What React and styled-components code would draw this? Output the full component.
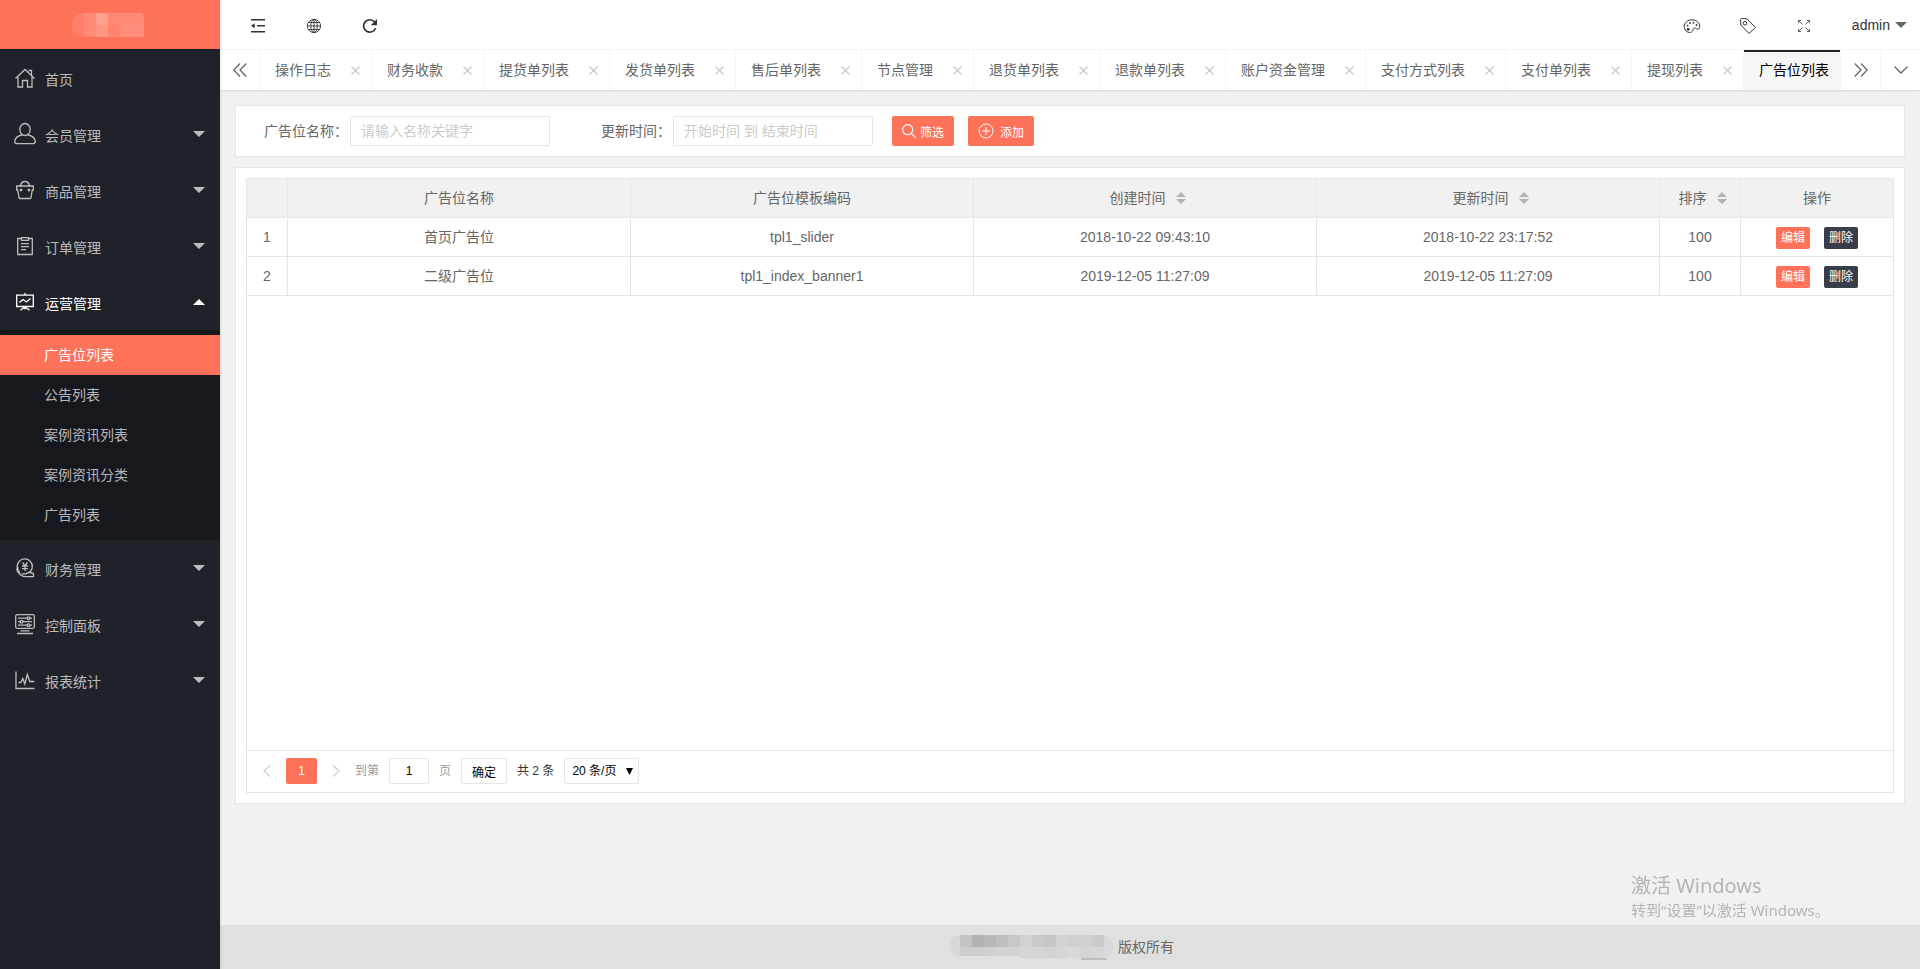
import React from 'react';
import styled, { createGlobalStyle, css } from 'styled-components';

const accent = '#ff725a';
const dark = '#20222a';
const line = '#e6e6e6';

const GlobalStyle = createGlobalStyle`
  *, *::before, *::after { box-sizing: border-box; }
  body {
    margin: 0;
    background: #f1f1f1;
    color: #666;
    font: 14px/24px "Liberation Sans", "Noto Sans CJK SC", sans-serif;
  }
  button, input, select { font-family: inherit; margin: 0; }
  button { cursor: pointer; padding: 0; border: 0; background: none; color: inherit; }
  a { color: inherit; text-decoration: none; }
  ul { list-style: none; margin: 0; padding: 0; }
`;

const Shell = styled.div`
  display: grid;
  grid-template-columns: 220px minmax(0, 1fr);
  min-height: 100vh;
`;

/* Side bar */
const Sidebar = styled.aside`
  background: ${dark};
  color: rgba(255, 255, 255, 0.7);
  box-shadow: 1px 0 2px rgba(0, 0, 0, 0.1);
  z-index: 2;
`;
const Logo = styled.a`
  display: flex;
  align-items: center;
  justify-content: center;
  height: 50px;
  background: ${accent};
  border-bottom: 1px solid #1a1b21;
  padding-right: 4px;
`;
const NavLink = styled.a`
  display: flex;
  align-items: center;
  height: 56px;
  padding: 0 15px 0 13px;
  color: ${(p) => (p.$open ? '#fff' : 'inherit')};
`;
const NavIcon = styled.svg`
  width: 24px;
  height: 24px;
  fill: none;
  stroke: currentColor;
  stroke-width: 1.3;
`;
const NavText = styled.span`
  flex: 1;
  padding: 4px 0 0 8px;
`;
const Caret = styled.svg`
  width: 12px;
  height: 6px;
  fill: currentColor;
`;
const SubMenu = styled.ul`
  && { padding: 5px 0; }
  background: #17181d;
  border-radius: 2px;
`;
const SubLink = styled.a`
  display: block;
  height: 40px;
  line-height: 40px;
  padding-left: 44px;
  ${(p) => p.$active && css`
    background: ${accent};
    color: #fff;
  `}
`;

/* Header and tabs */
const Main = styled.div`
  display: flex;
  flex-direction: column;
  min-width: 0;
`;
const Header = styled.header`
  display: flex;
  justify-content: space-between;
  height: 50px;
  padding-left: 10px;
  background: #fff;
  border-bottom: 1px solid #f6f6f6;
  color: #333;
`;
const Tools = styled.div`
  display: flex;
`;
const ToolButton = styled.button`
  display: flex;
  align-items: center;
  justify-content: center;
  width: 56px;
  height: 100%;
  padding-top: 2px;
`;
const ToolIcon = styled.svg`
  width: 16px;
  height: 16px;
  fill: none;
  stroke: currentColor;
  overflow: visible;
`;
const UserButton = styled.button`
  display: flex;
  align-items: center;
  gap: 5px;
  padding: 0 13px 0 20px;
  font-size: 14px;
  ${Caret} { color: #666; }
`;
const TabBar = styled.nav`
  display: flex;
  height: 40px;
  background: #fff;
  box-shadow: 0 1px 2px rgba(0, 0, 0, 0.1);
  z-index: 1;
`;
const TabControl = styled.button`
  display: flex;
  align-items: center;
  justify-content: center;
  flex: 0 0 40px;
  height: 40px;
  border: 0 solid #f6f6f6;
  border-width: ${(p) => (p.$side === 'left' ? '0 1px 0 0' : '0 0 0 1px')};
`;
const TabList = styled.ul`
  display: flex;
  flex: 1;
  min-width: 0;
  overflow: hidden;
`;
const Tab = styled.li`
  display: flex;
  align-items: center;
  flex: none;
  gap: 17px;
  padding: 0 8px 0 15px;
  border-right: 1px solid #f6f6f6;
  white-space: nowrap;
  ${(p) => p.$active && css`
    background: #f6f6f6;
    color: #000;
    box-shadow: inset 0 2px 0 ${dark};
  `}
`;
const TabClose = styled.button`
  display: flex;
  align-items: center;
  justify-content: center;
  width: 15px;
  height: 16px;
  color: #c8c8c8;
`;
const Stroke = styled.svg`
  fill: none;
  stroke: currentColor;
  flex: none;
`;

/* Content */
const Content = styled.main`
  flex: 1;
  display: flex;
  flex-direction: column;
  gap: 10px;
  padding: 15px;
`;
const Card = styled.section`
  padding: 10px;
  background: #fff;
  border: 1px solid ${line};
`;
const Filters = styled.form`
  display: flex;
  align-items: center;
  gap: 19px;
`;
const Field = styled.div`
  display: flex;
  align-items: center;
`;
const FieldLabel = styled.label`
  width: 104px;
  padding-right: 2px;
  text-align: right;
  white-space: nowrap;
`;
const TextInput = styled.input`
  width: 200px;
  height: 30px;
  padding: 0 10px;
  border: 1px solid ${line};
  border-radius: 2px;
  font-size: 14px;
  &::placeholder { color: #ccc; }
`;
const Buttons = styled.div`
  display: flex;
  gap: 14px;
`;
const ActionButton = styled.button`
  display: flex;
  align-items: center;
  gap: ${(p) => p.$gap};
  height: 30px;
  padding: 0 10px;
  border-radius: 2px;
  background: ${accent};
  color: #fff;
  font-size: 12px;
`;
const TableBox = styled.div`
  border: 1px solid ${line};
`;
const TableBody = styled.div`
  min-height: 571px;
`;
const Table = styled.table`
  width: 100%;
  table-layout: fixed;
  border-collapse: separate;
  border-spacing: 0;
  text-align: center;
  th, td {
    height: 39px;
    padding: 0;
    border: 0 solid ${line};
    border-width: 0 1px 1px 0;
    font-weight: 400;
  }
  th { background: #f1f1f1; }
  th:last-child, td:last-child { border-right: 0; }
`;
const Col = styled.col`
  width: ${(p) => p.$w};
`;
const SortHead = styled.span`
  display: inline-flex;
  align-items: center;
  gap: 10px;
  padding-left: 5px;
`;
const SortButton = styled.button`
  display: flex;
`;
const RowActions = styled.div`
  display: flex;
  justify-content: center;
  gap: 14px;
  padding-top: 1px;
`;
const MiniButton = styled.button`
  height: 22px;
  padding: 0 5px;
  border-radius: 2px;
  background: ${(p) => (p.$dark ? '#393d49' : accent)};
  color: #fff;
  font-size: 12px;
  line-height: 22px;
`;
const Pager = styled.div`
  display: flex;
  align-items: center;
  height: 42px;
  padding: 0 0 1px 7px;
  border-top: 1px solid ${line};
  color: #999;
  font-size: 12px;
  gap: 10px;
`;
const PageStep = styled.button`
  display: flex;
  align-items: center;
  justify-content: center;
  width: 26px;
  height: 26px;
  color: #d2d2d2;
`;
const PageNumber = styled.button`
  width: 31px;
  height: 26px;
  margin: 0 -4px;
  border-radius: 2px;
  background: ${accent};
  color: #fff;
  font-size: 12px;
`;
const PageJump = styled.label`
  display: flex;
  align-items: center;
  gap: 10px;
  margin-left: -4px;
`;
const PageInput = styled.input`
  width: 40px;
  height: 26px;
  border: 1px solid ${line};
  border-radius: 2px;
  text-align: center;
  font-size: 12px;
  color: #000;
`;
const PageConfirm = styled.button`
  width: 46px;
  height: 26px;
  border: 1px solid ${line};
  border-radius: 2px;
  color: #000;
  font-size: 12px;
`;
const PageTotal = styled.span`
  color: #333;
`;
const SelectBox = styled.div`
  display: grid;
  align-items: center;
  > * { grid-area: 1 / 1; }
  > svg { justify-self: end; margin-right: 6px; pointer-events: none; }
`;
const PageSelect = styled.select`
  appearance: none;
  width: 75px;
  height: 26px;
  padding: 0 0 0 7px;
  border: 1px solid ${line};
  border-radius: 2px;
  background: #fff;
  color: #000;
  font-size: 12px;
`;
const Footer = styled.footer`
  display: flex;
  align-items: center;
  justify-content: center;
  gap: 4px;
  height: 44px;
  padding-right: 16px;
  background: #e0e0e0;
`;
const Activation = styled.div`
  position: fixed;
  right: 93px;
  bottom: 49px;
  width: 196px;
  color: #b4b4b4;
  font-family: "Noto Sans", "Noto Sans CJK SC", sans-serif;
  font-size: 15px;
  line-height: 20px;
  white-space: nowrap;
  pointer-events: none;
  z-index: 3;
`;
const ActivationTitle = styled.div`
  font-size: 20px;
  line-height: 28px;
`;

const icons = {
  home: <><path d="M2.5 12.5 12 3.5l9.500 9" /><path d="M5 11v10h4.500v-6.500h5V21H19V11" /><path d="M15.500 4.500H18.500V9" /></>,
  user: <><ellipse cx="12" cy="7.500" rx="5.200" ry="6" /><path d="M9 13c-4 .8-7 2.800-7.300 6.600 0 1.600.8 2 2.300 2h16c1.500 0 2.300-.4 2.300-2C22 15.800 19 13.800 15 13" /></>,
  bag: <><path d="M3.700 8h16.600v4H19.300L18 19.500q-.2 1-1.200 1H7.200q-1 0-1.200-1L4.700 12h-1z" /><path d="M7.500 8c.4-3 2-4.500 4.500-4.500s4.100 1.500 4.500 4.500" /><path d="M8 10.800v2.400M16 10.800v2.400" strokeWidth="2.400" /></>,
  order: <><path d="M8 4.500H4.700v16h14.600v-16H16" /><path d="M8.500 3.700h7v2.600h-7zM8 9.700h8M8 12.700h8M8 15.700h5" /></>,
  board: <><path d="M3.700 5.200h16.600v11.300H3.700zM12 3v2M12 16.500v3M7.500 20.300l3-2.300h3l3 2.300" /><path d="m6.500 12.500 3.500-3 3.500 2.500 4-3.500" /></>,
  money: <><path d="M7 16.500a7.600 7.600 0 1 1 9.700-.2" /><path d="m9.500 6.500 2.500 3.200 2.500-3.200M9 10h6M9 12.700h6M12 9.700V15" /><path d="M5.500 11.500c-1.800 1-2 2.500-.8 4.300l3 3.200c1.500 1.200 3.500 1.700 6 1.700h6.800v-3.200l-4.500-1.200-3.500 1.500h-4" /></>,
  panel: <><rect x="2.700" y="2.700" width="18.600" height="13.600" rx="1.500" /><path d="M5 6.200h14M5 9.700h14M5 13.200h14M7.500 18.800h9M4 21.500h16" /><g fill={dark}><circle cx="15.500" cy="6.200" r="1.400" /><circle cx="8.500" cy="9.700" r="1.400" /><circle cx="15.500" cy="13.200" r="1.400" /></g></>,
  chart: <><path d="M3 3.500v17h18.500" /><path d="M5.500 14.500h2.300l2-4 2 5.500 2.500-9.500 2.500 7h4.500" /></>,
};

const Down = () => <Caret viewBox="0 0 12 6" aria-hidden="true"><path d="M0 0h12L6 6z" /></Caret>;
const Up = () => <Caret viewBox="0 0 12 6" aria-hidden="true"><path d="M0 6h12L6 0z" /></Caret>;

const menu = [
  { icon: 'home', text: '首页' },
  { icon: 'user', text: '会员管理', more: true },
  { icon: 'bag', text: '商品管理', more: true },
  { icon: 'order', text: '订单管理', more: true },
  { icon: 'board', text: '运营管理', more: true, children: ['广告位列表', '公告列表', '案例资讯列表', '案例资讯分类', '广告列表'] },
  { icon: 'money', text: '财务管理', more: true },
  { icon: 'panel', text: '控制面板', more: true },
  { icon: 'chart', text: '报表统计', more: true },
];

const tabs = ['操作日志', '财务收款', '提货单列表', '发货单列表', '售后单列表', '节点管理', '退货单列表', '退款单列表', '账户资金管理', '支付方式列表', '支付单列表', '提现列表', '广告位列表'];

const rows = [
  ['首页广告位', 'tpl1_slider', '2018-10-22 09:43:10', '2018-10-22 23:17:52', '100'],
  ['二级广告位', 'tpl1_index_banner1', '2019-12-05 11:27:09', '2019-12-05 11:27:09', '100'],
];

const mosaicTop = ['#c5c4c2', '#b1b2b4', '#bab8b7', '#c0bfbe', '#c7c8ca', '#d2d2d2', '#cacac8', '#c5c7c7', '#d1d3d2', '#d0d0ce', '#d1d1d0', '#cacbcb'];
const mosaicBottom = ['#cdcdcd', '#cdcdcd', '#d2d0cf', '#d3d3d3', '#d1d2d3', '#d6d6d6', '#d5d5d4', '#d2d3d3', '#d5d6d6', '#d9d9d8', '#d4d4d4', '#d7d6d6'];

const LogoMark = () => (
  <svg width="72" height="24" viewBox="0 0 72 24" aria-hidden="true">
    <path d="M12 0C5 0 0 5 0 10v7c0 4 5 7 12 7z" fill="#ff7f69" />
    <path d="M12 0h12v24H12z" fill="#ff8a76" />
    <path d="M24 0h12v12H24z" fill="#ff9f8d" />
    <path d="M24 12h12v12H24z" fill="#ff9583" />
    <path d="M36 0h33l3 2v10H36z" fill="#ff8974" />
    <path d="M36 12h12v12H36z" fill="#ff836d" />
    <path d="M48 12h24v12H48z" fill="#ff8d79" />
  </svg>
);

const FooterMark = () => (
  <svg width="164" height="26" viewBox="0 0 164 26" aria-hidden="true">
    <path d="M10 1C3 1 0 7 0 12s4 10 10 10z" fill="#d8d8d7" />
    <path d="M154 1c6 1 10 6 10 11 0 6-4 11-10 12z" fill="#dadada" />
    {mosaicTop.map((c, i) => <rect key={i} x={10 + i * 12} y="1" width="12" height="12" fill={c} />)}
    {mosaicBottom.map((c, i) => <rect key={i} x={10 + i * 12} y="13" width="12" height={i > 4 ? 11 : 9} fill={c} />)}
    <path d="M131 25h26" stroke="#9b9ca0" strokeWidth="1" />
  </svg>
);

function Sort({ label }) {
  return (
    <SortHead>
      {label}
      <SortButton aria-label={`${label}排序`}>
        <svg width="10" height="12" viewBox="0 0 10 12" fill="#b2b2b2"><path d="M0 5h10L5 0zM0 7h10l-5 5z" /></svg>
      </SortButton>
    </SortHead>
  );
}

export default function App() {
  return (
    <>
      <GlobalStyle />
      <Shell>
        <Sidebar>
          <Logo href="#" aria-label="首页"><LogoMark /></Logo>
          <ul>
            {menu.map((m) => (
              <li key={m.text}>
                <NavLink href="#" $open={!!m.children}>
                  <NavIcon viewBox="0 0 24 24" aria-hidden="true">{icons[m.icon]}</NavIcon>
                  <NavText>{m.text}</NavText>
                  {m.more && (m.children ? <Up /> : <Down />)}
                </NavLink>
                {m.children && (
                  <SubMenu>
                    {m.children.map((c, i) => (
                      <li key={c}><SubLink href="#" $active={i === 0}>{c}</SubLink></li>
                    ))}
                  </SubMenu>
                )}
              </li>
            ))}
          </ul>
        </Sidebar>

        <Main>
          <Header>
            <Tools>
              <ToolButton aria-label="侧边伸缩">
                <ToolIcon viewBox="0 0 16 16" strokeWidth="1.400">
                  <path d="M1 1.700h14M7 7.700h8M1 13.700h14M3.500 7.700H5" />
                  <path d="M4.500 5.200v5L1 7.700z" fill="currentColor" stroke="none" />
                </ToolIcon>
              </ToolButton>
              <ToolButton aria-label="前台">
                <ToolIcon viewBox="0 0 16 16" strokeWidth="0.900">
                  <circle cx="8" cy="8" r="6.600" /><ellipse cx="8" cy="8" rx="3.200" ry="6.600" />
                  <path d="M8 1.400v13.200M1.400 8h13.200M2.500 4.500h11M2.500 11.500h11" />
                </ToolIcon>
              </ToolButton>
              <ToolButton aria-label="刷新">
                <ToolIcon viewBox="0 0 16 16" strokeWidth="1.700">
                  <path d="M13.600 10.200A6.200 6.200 0 1 1 12.600 4" />
                  <path d="M15 1v6.200H8.800z" fill="currentColor" stroke="none" />
                </ToolIcon>
              </ToolButton>
            </Tools>
            <Tools>
              <ToolButton aria-label="主题">
                <ToolIcon viewBox="0 0 16 16">
                  <path d="M4 14.200C1.500 13.300.3 11 .3 8.500.3 4.500 3.700 1.800 8 1.800s7.700 2.700 7.700 6.700c0 1.500-.5 2.700-1.600 2.700-1.700 0-2-1.500-3.600-1.200-1.700.3-1.200 2-2 3.200-.9 1.200-2.700 1.600-4.500 1z" />
                  <g fill="currentColor" stroke="none"><circle cx="4.200" cy="11.300" r="1.400" /><circle cx="3.600" cy="7.600" r=".9" /><circle cx="6" cy="5" r=".9" /><circle cx="9.500" cy="4.700" r=".9" /><circle cx="12.500" cy="7" r=".9" /></g>
                </ToolIcon>
              </ToolButton>
              <ToolButton aria-label="便签">
                <ToolIcon viewBox="0 0 16 16">
                  <path d="M.5 1.500.8 7l8.200 8.500 6.500-6L7 .8 1.500.5z" /><circle cx="5" cy="5.200" r="1.800" />
                </ToolIcon>
              </ToolButton>
              <ToolButton aria-label="全屏">
                <ToolIcon viewBox="0 0 16 16" color="#666">
                  <path d="m2.500 2.500 4 4m7-4-4 4m-7 7 4-4m7 4-4-4M2.500 5V2.500H5M11 2.500h2.500V5M2.500 11v2.500H5M11 13.500h2.500V11" />
                </ToolIcon>
              </ToolButton>
              <UserButton>admin<Down /></UserButton>
            </Tools>
          </Header>

          <TabBar>
            <TabControl $side="left" aria-label="向左">
              <Stroke width="14" height="14" viewBox="0 0 14 14" strokeWidth="1.300"><path d="M7 .5.800 7 7 13.500M13.300.500 7 7l6.300 6.500" /></Stroke>
            </TabControl>
            <TabList>
              {tabs.map((t, i) => (
                <Tab key={t} $active={i === tabs.length - 1}>
                  {t}
                  <TabClose aria-label={`关闭${t}`}>
                    <Stroke width="9" height="9" viewBox="0 0 9 9" strokeWidth="1.200"><path d="m.5.5 8 8m0-8-8 8" /></Stroke>
                  </TabClose>
                </Tab>
              ))}
            </TabList>
            <TabControl $side="right" aria-label="向右">
              <Stroke width="14" height="14" viewBox="0 0 14 14" strokeWidth="1.300"><path d="M.700.500 7 7 .700 13.500M7 .500 13.200 7 7 13.500" /></Stroke>
            </TabControl>
            <TabControl $side="right" aria-label="更多">
              <Stroke width="14" height="8" viewBox="0 0 14 8" strokeWidth="1.300"><path d="m.5.5 6.500 6.500L13.500.5" /></Stroke>
            </TabControl>
          </TabBar>

          <Content>
            <Card>
              <Filters onSubmit={(e) => e.preventDefault()}>
                <Field>
                  <FieldLabel htmlFor="name">广告位名称：</FieldLabel>
                  <TextInput id="name" placeholder="请输入名称关键字" />
                </Field>
                <Field>
                  <FieldLabel htmlFor="time">更新时间：</FieldLabel>
                  <TextInput id="time" placeholder="开始时间 到 结束时间" />
                </Field>
                <Buttons>
                  <ActionButton $gap="4px">
                    <Stroke width="14" height="14" viewBox="0 0 14 14" strokeWidth="1.200"><circle cx="5.700" cy="5.700" r="5" /><path d="m9.300 9.300 4.400 4.400" /></Stroke>
                    筛选
                  </ActionButton>
                  <ActionButton type="button" $gap="6px">
                    <Stroke width="16" height="16" viewBox="0 0 16 16"><circle cx="8" cy="8" r="7" /><path d="M8 4v8M4 8h8" /></Stroke>
                    添加
                  </ActionButton>
                </Buttons>
              </Filters>
            </Card>

            <Card>
              <TableBox>
                <TableBody>
                  <Table>
                    <colgroup>
                      <Col $w="41px" /><Col /><Col /><Col /><Col /><Col $w="81px" /><Col $w="152px" />
                    </colgroup>
                    <thead>
                      <tr>
                        <th />
                        <th>广告位名称</th>
                        <th>广告位模板编码</th>
                        <th><Sort label="创建时间" /></th>
                        <th><Sort label="更新时间" /></th>
                        <th><Sort label="排序" /></th>
                        <th>操作</th>
                      </tr>
                    </thead>
                    <tbody>
                      {rows.map((r, i) => (
                        <tr key={i}>
                          <td>{i + 1}</td>
                          {r.map((c, j) => <td key={j}>{c}</td>)}
                          <td>
                            <RowActions>
                              <MiniButton>编辑</MiniButton>
                              <MiniButton $dark>删除</MiniButton>
                            </RowActions>
                          </td>
                        </tr>
                      ))}
                    </tbody>
                  </Table>
                </TableBody>
                <Pager>
                  <PageStep aria-label="上一页">
                    <Stroke width="8" height="12" viewBox="0 0 8 12" strokeWidth="1.500"><path d="M7 .5 1 6l6 5.500" /></Stroke>
                  </PageStep>
                  <PageNumber>1</PageNumber>
                  <PageStep aria-label="下一页">
                    <Stroke width="8" height="12" viewBox="0 0 8 12" strokeWidth="1.500"><path d="m1 .5 6 5.500-6 5.500" /></Stroke>
                  </PageStep>
                  <PageJump htmlFor="page">到第<PageInput id="page" defaultValue="1" /></PageJump>
                  <span>页</span>
                  <PageConfirm>确定</PageConfirm>
                  <PageTotal>共 2 条</PageTotal>
                  <SelectBox>
                    <PageSelect aria-label="每页条数"><option>20 条/页</option></PageSelect>
                    <svg width="7" height="7" viewBox="0 0 7 7" aria-hidden="true"><path d="M0 0h7L3.500 7z" /></svg>
                  </SelectBox>
                </Pager>
              </TableBox>
            </Card>
          </Content>

          <Footer><FooterMark />版权所有</Footer>
        </Main>
      </Shell>
      <Activation>
        <ActivationTitle>激活 Windows</ActivationTitle>
        转到“设置”以激活 Windows。
      </Activation>
    </>
  );
}
